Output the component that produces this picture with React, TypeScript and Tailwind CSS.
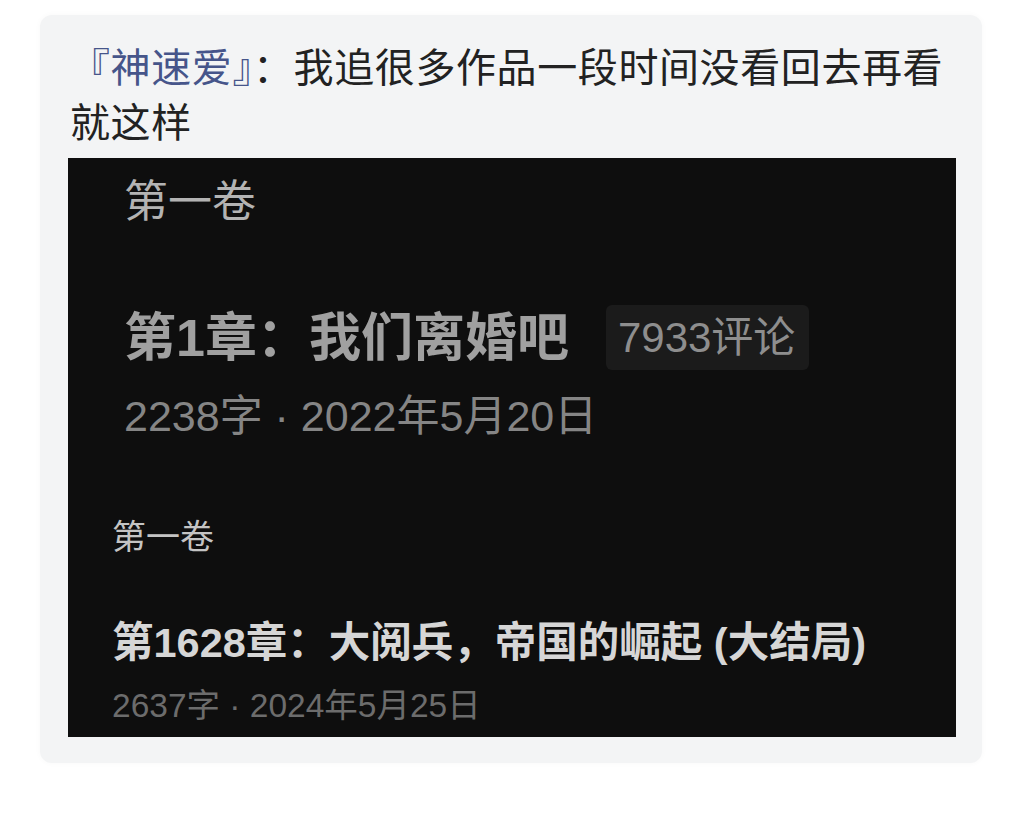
export default function App() {
  return (
    <div className="min-h-[821px] w-[1024px] bg-white pt-[15px] pl-[40px] font-['Noto_Sans_CJK_SC','Noto_Sans',sans-serif]">
      {/* Post card */}
      <div className="w-[942px] h-[748px] rounded-xl bg-[#f3f4f5] pt-[23px] px-[28px] shadow-[0_0_6px_rgba(0,0,0,0.03)]">
        <p className="ml-[2px] text-[40px] leading-[55px] tracking-[0.6px] text-[#222222]">
          <span className="text-[#46558a]">『神速爱』</span>：我追很多作品一段时间没看回去再看就这样
        </p>

        {/* Screenshot of the chapter list */}
        <div className="mt-[10px] w-[888px] h-[579px] bg-[#0e0e0e] pl-[44px] pt-[22px] font-['Liberation_Sans','Noto_Sans_CJK_SC',sans-serif]">
          <div className="pl-[12px]">
            <div className="text-[44px] leading-none text-[#b3b3b3]">第一卷</div>
            <div className="mt-[81px] flex items-center">
              <span className="text-[52px] leading-none font-bold text-[#a0a0a0]">第1章：我们离婚吧</span>
              <span className="ml-[37px] h-[65px] flex items-center rounded-md bg-[#1b1b1b] pl-[12px] pr-[14px] text-[42px] leading-none text-[#8e8e8e]">
                7933评论
              </span>
            </div>
            <div className="mt-[25px] text-[43px] leading-none text-[#858585]">2238字 · 2022年5月20日</div>
          </div>

          <div className="mt-[82px] text-[34px] leading-none text-[#c4c4c4]">第一卷</div>
          <div className="mt-[68px] text-[41.5px] leading-none font-bold text-[#d6d6d6]">
            第1628章：大阅兵，帝国的崛起 (大结局)
          </div>
          <div className="mt-[25px] text-[33.5px] leading-none text-[#6c6c6c]">2637字 · 2024年5月25日</div>
        </div>
      </div>
    </div>
  );
}
